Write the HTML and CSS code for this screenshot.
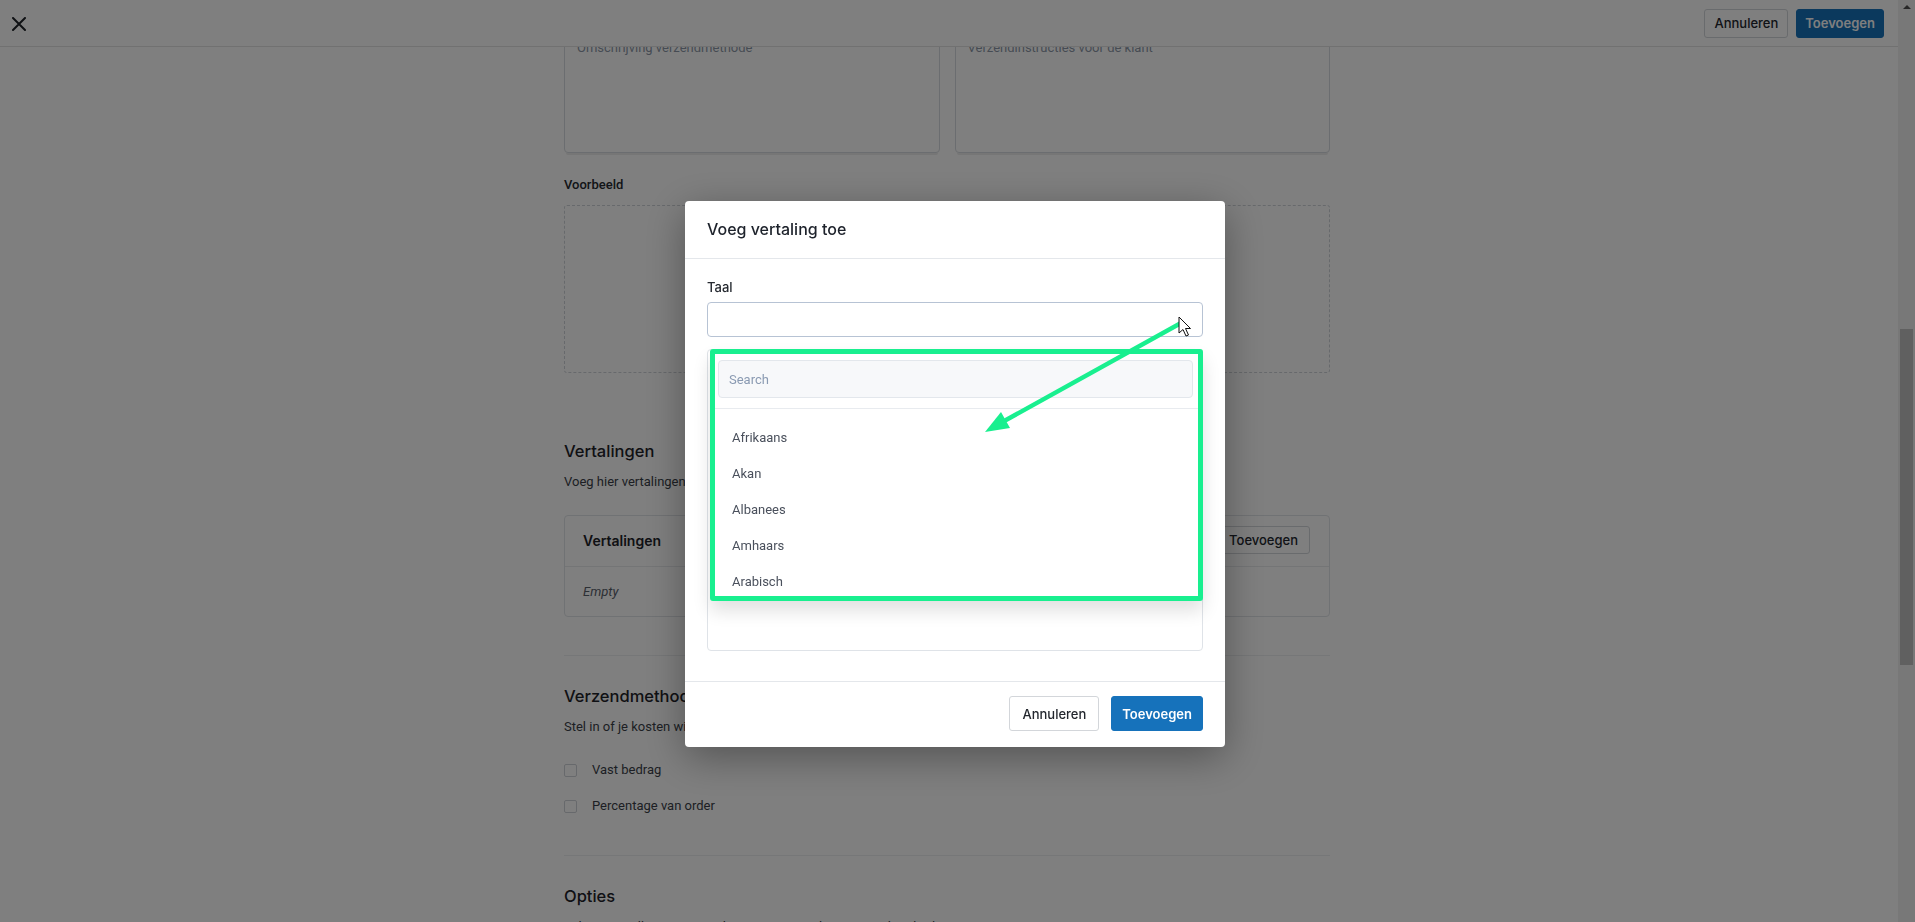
FILE: index.html
```html
<!DOCTYPE html>
<html>
  <head>
    <title>Verzendmethode toevoegen</title>
    <meta charset="utf-8">
    <meta name="viewport" content="width=device-width, initial-scale=1">
    <link rel="stylesheet" href="styles.css">
  </head>

  <body>
    <div class="page">

      <div class="main">
        <div class="topbar">
          <button class="close" aria-label="Sluiten">
            <svg width="14" height="14" viewBox="0 0 14 14"><path d="M1 1L13 13M13 1L1 13" stroke="#1f2328" stroke-width="2" stroke-linecap="round"/></svg>
          </button>
          <div class="actions">
            <button class="btn btn-top">Annuleren</button>
            <button class="btn btn-top btn-primary">Toevoegen</button>
          </div>
        </div>

        <div class="content">
          <div class="textareas">
            <div class="textarea">Omschrijving verzendmethode</div>
            <div class="textarea">Verzendinstructies voor de klant</div>
          </div>

          <div class="field-label">Voorbeeld</div>
          <div class="preview"></div>

          <h2>Vertalingen</h2>
          <p class="lead">Voeg hier vertalingen toe voor deze verzendmethode.</p>

          <div class="card">
            <div class="card-header">
              <span>Vertalingen</span>
              <button class="btn btn-small">Toevoegen</button>
            </div>
            <div class="card-body"><em>Empty</em></div>
          </div>

          <hr>

          <h2>Verzendmethode kosten</h2>
          <p class="lead">Stel in of je kosten wilt berekenen met een vast bedrag of een percentage van de order.</p>

          <div class="checks">
            <label class="check"><span class="box"></span>Vast bedrag</label>
            <label class="check"><span class="box"></span>Percentage van order</label>
          </div>

          <hr>

          <h2>Opties</h2>
          <p class="lead">Selecteer welke opties je wilt toepassen op deze verzendmethode.</p>
        </div>
      </div>

      <div class="scrollbar">
        <span class="scroll-arrow"></span>
        <div class="thumb"></div>
      </div>
    </div>

    <div class="overlay">
      <div class="modal">
        <div class="modal-header">Voeg vertaling toe</div>

        <div class="modal-body">
          <label class="modal-label" for="taal">Taal</label>
          <div class="select-wrap">
            <div class="select" id="taal"></div>

            <div class="dropdown">
              <div class="dropdown-search">
                <div class="search">Search</div>
              </div>
              <ul class="options">
                <li>Afrikaans</li>
                <li>Akan</li>
                <li>Albanees</li>
                <li>Amhaars</li>
                <li>Arabisch</li>
                <li>Armeens</li>
              </ul>
            </div>
          </div>
          <div class="modal-field"></div>
        </div>

        <div class="modal-footer">
          <button class="btn btn-modal">Annuleren</button>
          <button class="btn btn-modal btn-primary">Toevoegen</button>
        </div>
      </div>

      <!-- annotation arrow + cursor -->
      <svg class="annotation" width="1915" height="922" viewBox="0 0 1915 922">
        <line x1="1006" y1="420" x2="1181" y2="323" stroke="#19ef8f" stroke-width="4.5" stroke-linecap="round"/>
        <polygon points="985,432 1010,428 1001,412" fill="#19ef8f"/>
        <path d="M1179 317 L1179 333 L1183 329.5 L1186 336 L1188.5 335 L1185.5 328.5 L1190.5 328.5 Z" fill="#fff" stroke="#111" stroke-width="1" stroke-linejoin="round"/>
      </svg>
    </div>
  </body>
</html>
```

FILE: styles.css
```css
html, body {
  margin: 0;
  height: 100vh;
  overflow: hidden;
}

* {
  box-sizing: border-box;
}

body {
  font-family: Roboto, "Noto Sans", sans-serif;
  font-size: 13px;
  color: #2f3440;
  background: #fff;
}

button {
  font-family: Inter, Roboto, sans-serif;
}

.page {
  display: flex;
  height: 100%;
}

.main {
  flex: 1;
  position: relative;
  overflow: hidden;
}

/* top bar lies over the scrolled content */
.topbar {
  position: absolute;
  top: 0;
  left: 0;
  right: 0;
  height: 47px;
  background: #fff;
  border-bottom: 1px solid #e3e3e3;
  display: flex;
  align-items: center;
  justify-content: space-between;
  padding: 0 14px 0 12px;
  z-index: 2;
}

.close {
  border: 0;
  background: none;
  padding: 0;
  width: 14px;
  height: 14px;
  margin-top: 1px;
}

.actions {
  display: flex;
  gap: 8px;
}

.btn {
  height: 29px;
  padding: 0 14px;
  border: 1px solid #d3d6da;
  border-radius: 3px;
  background: #fff;
  color: #23272e;
  font-size: 13px;
  font-weight: 500;
}

.btn-top {
  padding: 0 9px;
}

.btn-primary {
  background: #1672bb;
  border-color: #1672bb;
  color: #fff;
  font-weight: 600;
}

.btn-top.btn-primary {
  padding: 0 8px;
}

.content {
  width: 766px;
  margin: 0 auto;
  padding-top: 30px;
  position: relative;
  left: -2px;
}

.textareas {
  display: grid;
  grid-template-columns: 1fr 1fr;
  gap: 15px;
}

.textarea {
  height: 123px;
  border: 1px solid #d7dbe0;
  border-radius: 4px;
  padding: 8px 12px;
  line-height: 18px;
  color: #8c97a7;
  font-size: 13px;
  box-shadow: 0 4px 0 -2px #ececec;
}

.field-label {
  margin-top: 23px;
  line-height: 18px;
  font-weight: 500;
  color: #262a31;
}

.preview {
  margin-top: 11px;
  height: 168px;
  border: 1px dashed #cfd3d8;
  border-radius: 3px;
}

h2 {
  font-family: Inter, Roboto, sans-serif;
  font-size: 16.5px;
  font-weight: 500;
  line-height: 24px;
  color: #1e2229;
  margin: 66px 0 0;
}

.lead {
  margin: 10px 0 0;
  line-height: 18px;
  color: #3a3f48;
}

.card {
  margin-top: 24px;
  border: 1px solid #e1e4e8;
  border-radius: 4px;
}

.card-header {
  height: 51px;
  border-bottom: 1px solid #e8eaed;
  display: flex;
  align-items: center;
  justify-content: space-between;
  padding: 0 18px 2px;
  font-family: Inter, Roboto, sans-serif;
  font-size: 14px;
  font-weight: 600;
  color: #1e2229;
}

.btn-small {
  height: 28px;
  margin-right: 1px;
  padding: 0 11px;
}

.card-body {
  height: 49px;
  display: flex;
  align-items: center;
  padding: 0 18px;
  color: #59606b;
}

hr {
  margin: 38px 0 0;
  border: 0;
  border-top: 1px solid #eceef0;
}

hr + h2 {
  margin-top: 28px;
}

.checks {
  margin-top: 25px;
  display: grid;
  gap: 18px;
}

.check {
  display: flex;
  align-items: center;
  gap: 15px;
  line-height: 18px;
  color: #3a3f48;
}

.box {
  width: 13px;
  height: 13px;
  border: 1px solid #cfd3d8;
  border-radius: 2px;
}

.checks + hr {
  margin-top: 40px;
}

.scrollbar {
  width: 17px;
  background: #f1f1f1;
  display: flex;
  flex-direction: column;
  align-items: center;
}

.scroll-arrow {
  margin-top: 5px;
  border-left: 4px solid transparent;
  border-right: 4px solid transparent;
  border-bottom: 4px solid #505050;
}

.thumb {
  margin-top: 320px;
  width: 13px;
  height: 336px;
  background: #c1c1c1;
}

/* modal */
.overlay {
  position: fixed;
  inset: 0;
  background: rgba(0, 0, 0, 0.5);
  display: flex;
  justify-content: center;
  align-items: flex-start;
  padding: 201px 5px 0 0;
  z-index: 5;
}

.modal {
  width: 540px;
  background: #fff;
  border-radius: 4px;
  box-shadow: 0 10px 40px rgba(0, 0, 0, 0.35);
}

.modal-header {
  height: 58px;
  border-bottom: 1px solid #e4e7eb;
  display: flex;
  align-items: center;
  padding: 0 22px 2px;
  font-family: Inter, Roboto, sans-serif;
  font-size: 16px;
  font-weight: 500;
  color: #1d222b;
}

.modal-body {
  padding: 20px 22px 30px;
}

.modal-label {
  display: block;
  line-height: 16px;
  font-family: Inter, Roboto, sans-serif;
  font-weight: 500;
  color: #262a31;
}

.select-wrap {
  position: relative;
  margin-top: 7px;
}

.select {
  height: 35px;
  border: 1px solid #b7c3d4;
  border-radius: 4px;
}

.modal-field {
  margin-top: 12px;
  height: 302px;
  border: 1px solid #dfe3e8;
  border-radius: 4px;
}

.dropdown {
  position: absolute;
  top: calc(100% + 12px);
  left: 3px;
  right: 0;
  height: 252px;
  background: #fff;
  border: 5px solid #19ef8f;
  border-radius: 3px;
  box-shadow: 0 10px 18px rgba(0, 0, 0, 0.12);
  overflow: hidden;
  z-index: 3;
}

.dropdown-search {
  padding: 6px 5px 10px 3px;
  border-bottom: 1px solid #e8ebef;
}

.search {
  height: 38px;
  background: #f7f8fa;
  border: 1px solid #e3e7ec;
  border-radius: 4px;
  padding: 0 10px;
  display: flex;
  align-items: center;
  color: #8a9ab2;
}

.options {
  list-style: none;
  margin: 0;
  padding: 11px 0 0;
}

.options li {
  height: 36px;
  line-height: 36px;
  padding: 0 17px;
  color: #4a505c;
}

.modal-footer {
  border-top: 1px solid #e4e7eb;
  padding: 14px 22px 16px;
  display: flex;
  justify-content: flex-end;
  gap: 12px;
}

.btn-modal {
  height: 35px;
  padding: 0 12px;
  border-radius: 3px;
}

.btn-modal.btn-primary {
  padding: 0 10px;
}

.annotation {
  position: absolute;
  top: 0;
  left: 0;
  pointer-events: none;
  z-index: 10;
}
```
